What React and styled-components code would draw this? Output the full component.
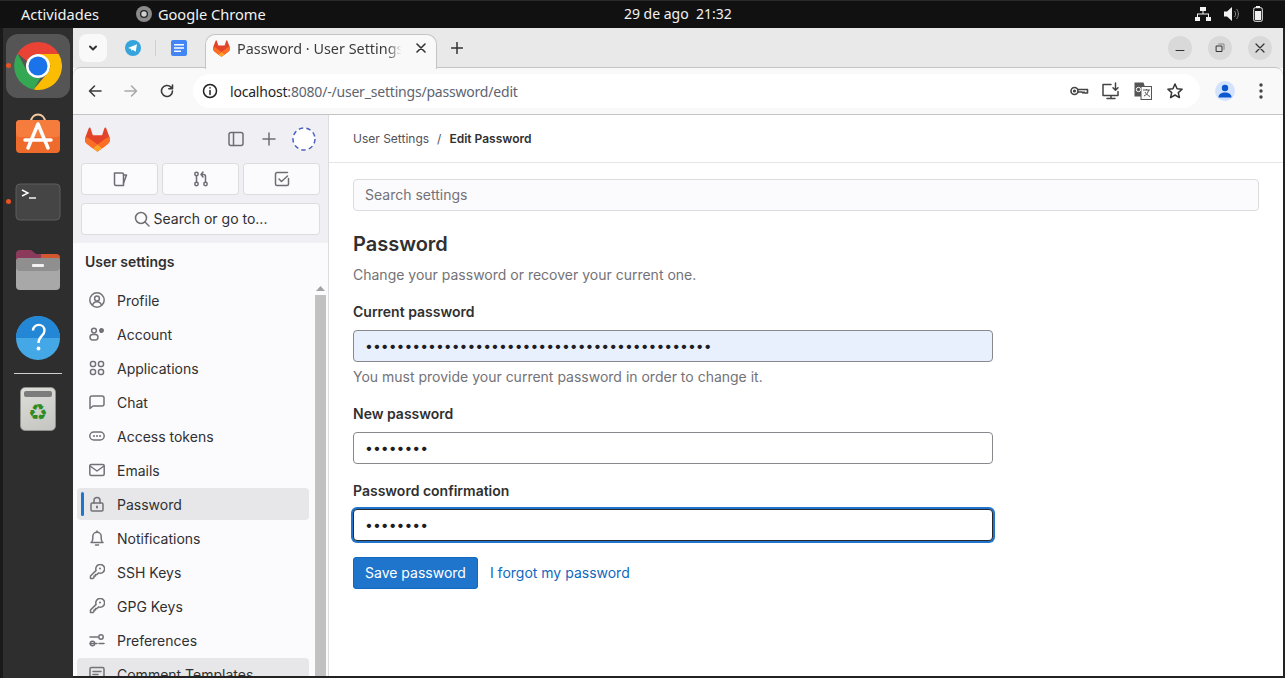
import React from "react";
import styled, { createGlobalStyle } from "styled-components";

const Global = createGlobalStyle`
html, body { margin: 0; padding: 0; background: #2e2e2e; overflow: hidden; }
* { box-sizing: border-box; }
`

const Screen = styled.div`
width: 1285px;
height: 678px;
display: flex;
flex-direction: column;
overflow: hidden;
font-family: Inter, "Liberation Sans", sans-serif;
background: #111;
`
const TopBar = styled.div`
height: 28px;
flex: none;
background: #111;
border-top: 1px solid #2a2a2a;
display: flex;
align-items: center;
color: #f2f2f2;
font-family: "Noto Sans", sans-serif;
font-size: 14.6px;
padding: 0 0 2px 21px;
`
const TopApp = styled.div`
display: flex;
align-items: center;
gap: 6px;
margin-left: 37px;
width: 488px;
`
const Clock = styled.div`
width: 400px;
font-size: 14px;
white-space: pre;
`
const TopTray = styled.div`
margin-left: auto;
display: flex;
align-items: center;
gap: 13px;
padding-right: 22px;
`
const Main = styled.div`
flex: 1;
display: flex;
min-height: 0;
`
const Dock = styled.div`
width: 73px;
flex: none;
background: #2e2e2e;
border-left: 3px solid #1a1a1a;
padding: 6px 3px 0 3px;
display: flex;
flex-direction: column;
align-items: center;
gap: 4px;
`
const DockTile = styled.div`
width: 64px;
height: 64px;
flex: none;
border-radius: 12px;
position: relative;
display: flex;
align-items: center;
justify-content: center;
background: ${p => (p.$active ? "#555" : "transparent")};
`
const RunDot = styled.span`
position: absolute;
left: 0;
top: 29px;
width: 5px;
height: 5px;
border-radius: 50%;
background: #e95420;
`
const DockRule = styled.div`
width: 48px;
height: 1px;
flex: none;
background: #cfcfcf;
margin-top: -1px;
margin-bottom: -1px;
`
const TrashCan = styled.div`
width: 36px;
height: 44px;
border-radius: 5px;
background: linear-gradient(160deg, #dededa, #c4c4c0);
border: 1px solid #8f8f8b;
padding: 3px;
display: flex;
flex-direction: column;
align-items: center;
`
const TrashLid = styled.div`
width: 100%;
height: 6px;
flex: none;
border-radius: 2px;
background: #7c7c7c;
`
const TrashMark = styled.div`
margin-top: 3px;
font-family: "DejaVu Sans", sans-serif;
font-size: 22px;
line-height: 26px;
color: #2e8b1f;
`
const Browser = styled.div`
flex: 1;
display: flex;
flex-direction: column;
min-width: 0;
border-right: 2px solid #222;
border-bottom: 2px solid #222;
background: #fff;
`
const TabStrip = styled.div`
height: 40px;
flex: none;
background: #e9e9e9;
display: flex;
align-items: flex-start;
padding: 6px 11px 0 6px;
`
const TabList = styled.button`
width: 28px;
height: 28px;
border: none;
border-radius: 8px;
background: #f9f9f9;
display: flex;
align-items: center;
justify-content: center;
padding: 0;
`
const PinnedTab = styled.div`
width: 24px;
height: 28px;
display: flex;
align-items: center;
justify-content: center;
margin-left: ${p => p.$gap}px;
`
const TabRule = styled.div`
width: 1px;
height: 16px;
margin: 6px 0 0 10px;
background: #cfcfcf;
`
const Tab = styled.div`
width: 232px;
height: 35px;
margin-left: 14px;
background: #f9f9f9;
border: 1px solid #c4c4c4;
border-bottom: none;
border-radius: 10px 10px 0 0;
display: flex;
align-items: center;
padding: 0 10px 8px 7px;
position: relative;
z-index: 2;
`
const TabTitle = styled.div`
flex: 1;
margin-left: 7px;
font-family: "Noto Sans", sans-serif;
font-size: 14.4px;
color: #3c3c3c;
white-space: nowrap;
-webkit-mask-image: linear-gradient(to right, #000 84%, transparent 92%);
mask-image: linear-gradient(to right, #000 84%, transparent 92%);
`
const NewTab = styled.div`
width: 24px;
height: 28px;
margin-left: 8px;
display: flex;
align-items: center;
justify-content: center;
`
const WindowButtons = styled.div`
margin-left: auto;
display: flex;
gap: 16px;
margin-top: 2px;
`
const WindowButton = styled.div`
width: 24px;
height: 24px;
border-radius: 50%;
background: #d9d9d9;
display: flex;
align-items: center;
justify-content: center;
`
const Toolbar = styled.div`
height: 48px;
flex: none;
margin-top: -1px;
background: #f9f9f9;
border-top: 1px solid #c4c4c4;
border-bottom: 1px solid #c4c4c4;
border-top-left-radius: 8px;
border-top-right-radius: 8px;
display: flex;
align-items: center;
padding: 0 12px 0 10px;
`
const NavButton = styled.div`
width: 24px;
height: 24px;
margin-right: 12px;
display: flex;
align-items: center;
justify-content: center;
`
const Omnibox = styled.div`
width: 1007px;
height: 34px;
margin-left: 2px;
background: #fff;
border-radius: 17px;
display: flex;
align-items: center;
padding: 0 15px 0 9px;
`
const SiteInfo = styled.div`
width: 16px;
height: 16px;
margin-right: 12px;
display: flex;
`
const Url = styled.div`
flex: 1;
font-family: "Noto Sans", sans-serif;
font-size: 14px;
letter-spacing: -0.2px;
color: #5d6470;
`
const Host = styled.span`
color: #1f1f1f;
`
const OmniIcons = styled.div`
display: flex;
align-items: center;
gap: 12px;
`
const OmniIcon = styled.div`
width: 20px;
height: 20px;
display: flex;
align-items: center;
justify-content: center;
`
const Avatar = styled.div`
width: 20px;
height: 20px;
margin-left: 15px;
border-radius: 50%;
background: #d3e3fd;
display: flex;
align-items: center;
justify-content: center;
`
const KebabWrap = styled.div`
width: 20px;
margin-left: 16px;
display: flex;
justify-content: center;
`
const Page = styled.div`
flex: 1;
display: flex;
min-height: 0;
background: #fff;
`
const Sidebar = styled.aside`
width: 256px;
flex: none;
background: #fbfafd;
border-right: 1px solid #dcdcde;
display: flex;
flex-direction: column;
min-height: 0;
`
const SideTop = styled.div`
background: #f0f0f4;
height: 128px;
flex: none;
padding: 8px 8px 0 8px;
`
const SideHeader = styled.div`
height: 32px;
display: flex;
align-items: center;
padding-left: 4px;
margin-bottom: 8px;
`
const SideActions = styled.div`
margin-left: auto;
display: flex;
align-items: center;
gap: 17px;
padding-right: 4px;
`
const Spinner = styled.div`
margin-left: -2px;
display: flex;
`
const QuickRow = styled.div`
display: grid;
grid-template-columns: repeat(3, 77px);
gap: 4px;
margin-bottom: 8px;
`
const QuickButton = styled.button`
height: 32px;
padding: 0;
background: #fbfafd;
border: none;
border-radius: 4px;
box-shadow: inset 0 0 0 1px #dcdcde;
display: flex;
align-items: center;
justify-content: center;
`
const SearchButton = styled(QuickButton)`
width: 239px;
gap: 4px;
padding-bottom: 1px;
font-family: Inter, sans-serif;
font-size: 14px;
color: #303030;
`
const SideTitle = styled.div`
height: 38px;
flex: none;
padding: 0 0 2px 12px;
display: flex;
align-items: center;
font-size: 14px;
font-weight: 600;
color: #303030;
`
const SideScroll = styled.div`
flex: 1;
min-height: 0;
display: flex;
overflow: hidden;
`
const NavList = styled.nav`
width: 240px;
padding: 3px 4px 0 4px;
display: flex;
flex-direction: column;
gap: 2px;
`
const NavItem = styled.div`
height: 32px;
flex: none;
position: relative;
border-radius: 4px;
display: flex;
align-items: center;
gap: 12px;
padding-left: 12px;
font-size: 14px;
color: #303030;
background: ${p => (p.$on ? "#e7e7e9" : "transparent")};
`
const ActiveMark = styled.span`
position: absolute;
left: 4px;
top: 4px;
bottom: 4px;
width: 3px;
border-radius: 2px;
background: #1f75cb;
`
const Track = styled.div`
width: 15px;
padding: 0 2px;
display: flex;
flex-direction: column;
align-items: center;
`
const Arrow = styled.div`
height: 14px;
flex: none;
display: flex;
align-items: center;
justify-content: center;
`
const Thumb = styled.div`
flex: 1;
width: 11px;
background: #c1c1c1;
`
const Content = styled.main`
flex: 1;
min-width: 0;
display: flex;
flex-direction: column;
`
const Crumbs = styled.div`
height: 48px;
flex: none;
border-bottom: 1px solid #e5e5e7;
display: flex;
align-items: center;
padding-left: 24px;
font-size: 12px;
color: #535158;
`
const CrumbSep = styled.span`
margin: 0 8px;
`
const CrumbNow = styled.span`
color: #303030;
font-weight: 600;
`
const Body = styled.div`
padding: 16px 24px 0 24px;
`
const SearchField = styled.input`
display: block;
width: 100%;
height: 32px;
border: 1px solid #dcdcde;
border-radius: 4px;
background: #fbfafd;
padding: 0 11px 2px;
font-family: Inter, sans-serif;
font-size: 14px;
&::placeholder { color: #737278; opacity: 1; }
`
const Heading = styled.h2`
margin: 20px 0 0;
font-size: 20px;
line-height: 26px;
font-weight: 600;
color: #303030;
`
const Lead = styled.p`
margin: 8px 0 0;
font-size: 14px;
line-height: 20px;
color: #737278;
`
const Group = styled.div`
width: 640px;
margin-top: ${p => p.$top}px;
`
const Label = styled.label`
display: block;
padding-top: 1px;
font-size: 14px;
line-height: 20px;
font-weight: 600;
color: #303030;
margin-bottom: 8px;
`
const PasswordInput = styled.input`
display: block;
width: 100%;
height: 32px;
padding: 0 11px 1px;
border-radius: 4px;
outline: none;
font-family: Inter, sans-serif;
font-size: 14px;
color: #1f1e24;
background: ${p => (p.$filled ? "#e8f0fe" : "#fff")};
border: 1px solid ${p => (p.$focus ? "#28272d" : "#89888d")};
box-shadow: ${p => (p.$focus ? "0 0 0 2px #1f75cb" : "none")};
`
const Hint = styled.div`
margin-top: 5px;
font-size: 14px;
line-height: 20px;
color: #737278;
`
const Actions = styled.div`
margin-top: 16px;
display: flex;
align-items: center;
gap: 12px;
`
const SaveButton = styled.button`
height: 32px;
padding: 0 12px 1px;
border: none;
border-radius: 4px;
background: #1f75cb;
box-shadow: inset 0 0 0 1px #1068bf;
color: #fff;
font-family: Inter, sans-serif;
font-size: 14px;
`
const ForgotLink = styled.a`
font-size: 14px;
padding-bottom: 1px;
color: #1068bf;
`

// small svg helper for the 16px line icons
const Line = ({ s = 16, c = "#737278", w = 1.5, children, box = 16 }) => (
  <svg width={s} height={s} viewBox={`0 0 ${box} ${box}`} fill="none" stroke={c} strokeWidth={w} strokeLinecap="round" strokeLinejoin="round">
    {children}
  </svg>
)

const Tanuki = ({ s = 24 }) => (
  <svg width={s} height={s} viewBox="0 0 25 24">
    <path fill="#E24329" d="m24.507 9.5-.034-.09L21.082.562a.896.896 0 0 0-1.694.091l-2.29 7.01H7.825L5.535.653a.898.898 0 0 0-1.694-.09L.451 9.411.416 9.5a6.297 6.297 0 0 0 2.09 7.278l.012.01.03.022 5.16 3.867 2.56 1.935 1.554 1.176a1.051 1.051 0 0 0 1.268 0l1.555-1.176 2.56-1.935 5.197-3.89.014-.01A6.297 6.297 0 0 0 24.507 9.5Z" />
    <path fill="#FC6D26" d="m24.507 9.5-.034-.09a11.44 11.44 0 0 0-4.56 2.051l-7.447 5.632 4.742 3.584 5.197-3.89.014-.01A6.297 6.297 0 0 0 24.507 9.5Z" />
    <path fill="#FCA326" d="m7.707 20.677 2.56 1.935 1.555 1.176a1.051 1.051 0 0 0 1.268 0l1.555-1.176 2.56-1.935-4.743-3.584-4.755 3.584Z" />
    <path fill="#FC6D26" d="M5.01 11.461a11.43 11.43 0 0 0-4.56-2.05L.416 9.5a6.297 6.297 0 0 0 2.09 7.278l.012.01.03.022 5.16 3.867 4.745-3.584-7.444-5.632Z" />
  </svg>
)

const ChromeLogo = () => (
  <svg width="48" height="48" viewBox="0 0 48 48">
    <path fill="#ea4335" d="M24 0a24 24 0 0 1 20.8 12H24a12 12 0 0 0-11 7.2L3.6 11.6A24 24 0 0 1 24 0Z" />
    <path fill="#34a853" d="M3.6 11.6 13.6 30a12 12 0 0 0 13 5.8L19.6 47.6A24 24 0 0 1 3.6 11.6Z" />
    <path fill="#fbbc04" d="M44.8 12A24 24 0 0 1 19.6 47.6L34.4 30A12 12 0 0 0 33.6 16.6Z" fillRule="evenodd" />
    <path fill="#fbbc04" d="M24 12h20.8L30 30Z" />
    <circle cx="24" cy="24" r="12" fill="#fff" />
    <circle cx="24" cy="24" r="9.5" fill="#1a73e8" />
  </svg>
)

const SoftwareIcon = () => (
  <svg width="46" height="46" viewBox="0 0 46 46">
    <path d="M16 11c0-10 14-10 14 0" fill="none" stroke="#f2c9a0" strokeWidth="2" />
    <rect x="1" y="9" width="44" height="33" rx="4" fill="#ee6b2c" />
    <rect x="1" y="9" width="44" height="17" rx="4" fill="#f57c3c" />
    <path d="M23 13 13 37M23 13l10 24M10 29h26" stroke="#fff" strokeWidth="3.5" fill="none" strokeLinecap="round" />
  </svg>
)

const TerminalIcon = () => (
  <svg width="46" height="38" viewBox="0 0 46 38">
    <rect x="1" y="1" width="44" height="36" rx="4" fill="#454545" stroke="#5c5c5c" />
    <path d="M7 7l6 3-6 3" fill="none" stroke="#fff" strokeWidth="1.4" />
    <path d="M14 15h7" stroke="#fff" strokeWidth="1.4" />
  </svg>
)

const FilesIcon = () => (
  <svg width="46" height="42" viewBox="0 0 46 42">
    <path d="M1 5a4 4 0 0 1 4-4h11l5 4h20a4 4 0 0 1 4 4v8H1Z" fill="#8c3a5c" />
    <path d="M26 5h15a4 4 0 0 1 4 4v8H26Z" fill="#d2562e" />
    <rect x="1" y="9" width="44" height="32" rx="4" fill="#a8a8a8" />
    <rect x="1" y="9" width="44" height="13" rx="4" fill="#8f8f8f" />
    <rect x="17" y="15" width="12" height="3" rx="1" fill="#f1f1f1" />
  </svg>
)

const HelpIcon = () => (
  <svg width="46" height="46" viewBox="0 0 46 46">
    <circle cx="23" cy="23" r="22" fill="#45a8e6" />
    <path d="M1 23a22 22 0 0 1 44 0Z" fill="#2487d6" />
    <path d="M18 15.500c0-7.500 11.500-7.500 11.500 0 0 5.500-6 5.500-6 12.500" fill="none" stroke="#fff" strokeWidth="2.400" />
    <circle cx="23.500" cy="33.500" r="1.900" fill="#fff" />
  </svg>
)

const navItems = [
  ["Profile", <><circle cx="8" cy="8" r="7.2" /><circle cx="8" cy="6.5" r="2.4" /><path d="M3.6 13c.6-2.2 2.2-3.3 4.4-3.3s3.8 1.1 4.4 3.3" /></>],
  ["Account", <><circle cx="5" cy="4.6" r="2.4" /><rect x="1" y="8.5" width="8" height="5.5" rx="2.7" /><circle cx="12.5" cy="4.5" r="1.6" fill="#737278" strokeWidth="1.8" strokeDasharray="1.5 .5" /></>],
  ["Applications", <><rect x="1.5" y="1.5" width="5" height="5" rx="2" /><rect x="9.5" y="1.5" width="5" height="5" rx="2" /><rect x="1.5" y="9.5" width="5" height="5" rx="2" /><rect x="9.5" y="9.5" width="5" height="5" rx="2" /></>],
  ["Chat", <path d="M1 14.5V4a2 2 0 0 1 2-2h10a2 2 0 0 1 2 2v6a2 2 0 0 1-2 2H4Z" />],
  ["Access tokens", <><rect x=".8" y="4" width="14.4" height="8" rx="4" /><path d="M5 8h.01M8 8h.01M11 8h.01" strokeWidth="2" /></>],
  ["Emails", <><rect x=".8" y="2.5" width="14.4" height="11" rx="1.5" /><path d="m1 4 7 5 7-5" /></>],
  ["Password", <><rect x="2" y="7" width="12" height="8" rx="1.2" /><path d="M5 7V4.5a3 3 0 0 1 6 0V7" /><path d="M8 10.5v1" strokeWidth="2" /></>],
  ["Notifications", <><path d="M2 12.5c1.4-1 1.8-2.2 1.8-4V6.4a4.2 4.2 0 0 1 8.4 0v2.100c0 1.800.4 3 1.800 4Z" /><path d="M8 1v1M6.500 15h3" /></>],
  ["SSH Keys", <><path d="M1.500 14.500v-2.500l5.600-5.600a4.400 4.400 0 1 1 2.500 2.500L8 10.500H6.500V12H5v1.500l-1 1Z" /><path d="M11 4.500h.01" strokeWidth="2" /></>],
  ["GPG Keys", <><path d="M1.500 14.500v-2.500l5.600-5.600a4.400 4.400 0 1 1 2.500 2.500L8 10.500H6.500V12H5v1.500l-1 1Z" /><path d="M11 4.500h.01" strokeWidth="2" /></>],
  ["Preferences", <><path d="M1 5h8M1 11.500h7" /><circle cx="12" cy="5" r="2.200" /><circle cx="3.500" cy="11.500" r="2.200" /><path d="M10 11.500h5" /></>],
  ["Comment Templates", <><rect x="1" y="1.500" width="14" height="12" rx="1.500" /><path d="M4 5.500h8M4 8.500h5" /></>, true],
]

const Dots = "•"

export default function App() {
  return (
    <Screen>
      <Global />
      <TopBar>
        <span>Actividades</span>
        <TopApp>
          <svg width="16" height="16" viewBox="0 0 16 16">
            <circle cx="8" cy="8" r="8" fill="#8a8a8a" />
            <circle cx="8" cy="8" r="4" fill="#222" />
            <circle cx="8" cy="8" r="2.700" fill="#cfcfcf" />
          </svg>
          <span>Google Chrome</span>
        </TopApp>
        <Clock>29 de ago  21:32</Clock>
        <TopTray>
          <svg width="16" height="14" viewBox="0 0 16 14" fill="#f2f2f2">
            <rect x="5" y="0" width="6" height="4" />
            <rect x="0" y="10" width="5" height="4" />
            <rect x="11" y="10" width="5" height="4" />
            <path d="M7.500 4h1v2.500H14V10h-1V7.500H3V10H2V6.500h5.500Z" />
          </svg>
          <svg width="16" height="14" viewBox="0 0 16 14">
            <path d="M0 4.500h3L8 0v14l-5-4.500H0Z" fill="#f2f2f2" />
            <path d="M10.500 4c1.500 1.800 1.500 4.200 0 6M12.500 2c2.500 3 2.500 7 0 10" fill="none" stroke="#8d8d8d" />
          </svg>
          <svg width="10" height="16" viewBox="0 0 10 16">
            <rect x="3" y="0" width="4" height="2" fill="#f2f2f2" />
            <rect x=".7" y="1.700" width="8.600" height="13.600" rx="1.500" fill="none" stroke="#f2f2f2" />
            <rect x="2" y="5" width="6" height="9" fill="#f2f2f2" />
          </svg>
        </TopTray>
      </TopBar>
      <Main>
        <Dock>
          <DockTile $active><RunDot /><ChromeLogo /></DockTile>
          <DockTile><SoftwareIcon /></DockTile>
          <DockTile><RunDot /><TerminalIcon /></DockTile>
          <DockTile><FilesIcon /></DockTile>
          <DockTile><HelpIcon /></DockTile>
          <DockRule />
          <DockTile>
            <TrashCan>
              <TrashLid />
              <TrashMark>♻</TrashMark>
            </TrashCan>
          </DockTile>
        </Dock>
        <Browser>
          <TabStrip>
            <TabList>
              <Line s={12} c="#333" w={2} box={12}><path d="m3 4.500 3 3 3-3" /></Line>
            </TabList>
            <PinnedTab $gap={14}>
              <svg width="16" height="16" viewBox="0 0 16 16">
                <circle cx="8" cy="8" r="8" fill="#35a3dc" />
                <path d="M3 8 12 4.200 10.700 11.800 7.700 9.800 6.500 11 6.200 9Z" fill="#fff" />
              </svg>
            </PinnedTab>
            <TabRule />
            <PinnedTab $gap={11}>
              <svg width="16" height="16" viewBox="0 0 16 16">
                <rect width="16" height="16" rx="2" fill="#4285f4" />
                <path d="M3 4h10v1.500H3ZM3 7.300h10v1.500H3ZM3 10.500h7V12H3Z" fill="#fff" />
              </svg>
            </PinnedTab>
            <Tab>
              <Tanuki s={17} />
              <TabTitle>Password · User Settings</TabTitle>
              <Line s={10} c="#333" w={1.600} box={10}><path d="m1 1 8 8M9 1 1 9" /></Line>
            </Tab>
            <NewTab>
              <Line s={12} c="#333" w={1.500} box={12}><path d="M6 .500v11M.500 6h11" /></Line>
            </NewTab>
            <WindowButtons>
              <WindowButton><Line s={10} c="#333" w={1} box={10}><path d="M1 7.500h8" /></Line></WindowButton>
              <WindowButton>
                <Line s={10} c="#333" w={1} box={10}><rect x="1.500" y="3" width="5.500" height="5.500" /><path d="M3.500 1h5.500v5.500" stroke="#888" /></Line>
              </WindowButton>
              <WindowButton><Line s={10} c="#333" w={1.200} box={10}><path d="m1 1 8 8M9 1 1 9" /></Line></WindowButton>
            </WindowButtons>
          </TabStrip>
          <Toolbar>
            <NavButton>
              <Line s={14} c="#3c3c3c" w={1.600} box={14}><path d="M13 7H1.500M6.500 2 1.500 7l5 5" /></Line>
            </NavButton>
            <NavButton>
              <Line s={14} c="#a9a9a9" w={1.600} box={14}><path d="M1 7h11.500M7.500 2l5 5-5 5" /></Line>
            </NavButton>
            <NavButton>
              <Line s={14} c="#3c3c3c" w={1.600} box={14}><path d="M12.500 7a5.500 5.500 0 1 1-1.600-3.900L12.500 4.700M12.500 1v3.700H8.800" /></Line>
            </NavButton>
            <Omnibox>
              <SiteInfo>
                <Line s={16} c="#222" w={1.500}><circle cx="8" cy="8" r="6.500" /><path d="M8 7.500V11.500M8 4.800v.2" /></Line>
              </SiteInfo>
              <Url><Host>localhost</Host>:8080/-/user_settings/password/edit</Url>
              <OmniIcons>
                <OmniIcon>
                  <Line s={20} c="#444" w={1.600} box={20}><circle cx="5.500" cy="10" r="3.500" /><path d="M9 8.500h9.500v3.500h-2.500l-1-1-1 1-1-1H9" /><circle cx="5.500" cy="10" r=".8" fill="#444" /></Line>
                </OmniIcon>
                <OmniIcon>
                  <Line s={20} c="#444" w={1.500} box={20}><path d="M10 3.500H2v11h15v-4" /><path d="M6 17.500h8M10 15v2.500" /><path d="M14.500 2v7M12 6.800l2.500 2.500L17 6.800" /></Line>
                </OmniIcon>
                <OmniIcon>
                  <svg width="20" height="20" viewBox="0 0 20 20">
                    <path d="M1.500 1.500h9l1 3v11h-10Z" fill="#555" />
                    <rect x="8" y="5.500" width="10.500" height="13" fill="#fbfbfb" stroke="#555" />
                    <path d="M10 9h7M13.500 8v1M11 15c2.500-1 4-3 4.500-6M12 11c1 2 3 3.500 5 4.500" fill="none" stroke="#555" />
                    <circle cx="5.500" cy="8.500" r="2.200" fill="none" stroke="#fff" />
                  </svg>
                </OmniIcon>
                <OmniIcon>
                  <Line s={18} c="#333" w={1.500} box={18}><path d="m9 2 2.100 4.700 5 .5-3.800 3.400 1.100 5L9 13l-4.400 2.600 1.100-5L1.900 7.200l5-.5Z" /></Line>
                </OmniIcon>
              </OmniIcons>
            </Omnibox>
            <Avatar>
              <svg width="14" height="14" viewBox="0 0 14 14" fill="#0b57d0">
                <circle cx="7" cy="4" r="3.200" />
                <path d="M.5 13.500c0-3.500 2.900-5 6.500-5s6.500 1.500 6.500 5Z" />
              </svg>
            </Avatar>
            <KebabWrap>
              <svg width="4" height="16" viewBox="0 0 4 16" fill="#444">
                <circle cx="2" cy="2" r="1.700" /><circle cx="2" cy="8" r="1.700" /><circle cx="2" cy="14" r="1.700" />
              </svg>
            </KebabWrap>
          </Toolbar>
          <Page>
            <Sidebar>
              <SideTop>
                <SideHeader>
                  <Tanuki s={25} />
                  <SideActions>
                    <Line c="#6e6d73"><rect x="1" y="1.500" width="14" height="13" rx="2" /><path d="M5.500 1.500v13" /></Line>
                    <Line c="#6e6d73"><path d="M8 2v12M2 8h12" /></Line>
                    <Spinner>
                      <svg width="24" height="24" viewBox="0 0 24 24">
                        <circle cx="12" cy="12" r="11" fill="#fff" stroke="#4a5fc1" strokeWidth="1.500" strokeDasharray="4.500 3.200" />
                      </svg>
                    </Spinner>
                  </SideActions>
                </SideHeader>
                <QuickRow>
                  <QuickButton>
                    <Line c="#6e6d73"><path d="M2.500 2h7.500a1.500 1.500 0 0 1 1.500 1.500v11H4A1.500 1.500 0 0 1 2.500 13Z" /><path d="M11.500 4h3l-3 8" /></Line>
                  </QuickButton>
                  <QuickButton>
                    <Line c="#6e6d73"><circle cx="3.500" cy="3" r="1.700" /><circle cx="3.500" cy="13" r="1.700" /><circle cx="12.500" cy="13" r="1.700" /><path d="M3.500 4.700v6.600M12.500 11.300V5.500a2 2 0 0 0-2-2H8M10 1 8 3.500 10 6" /></Line>
                  </QuickButton>
                  <QuickButton>
                    <Line c="#6e6d73"><path d="M14.500 7.500v5.500a1.500 1.500 0 0 1-1.500 1.500H3A1.500 1.500 0 0 1 1.500 13V3A1.500 1.500 0 0 1 3 1.500h10.500" /><path d="m5 8 2.500 2.500 6-5.500" /></Line>
                  </QuickButton>
                </QuickRow>
                <SearchButton>
                  <Line c="#6e6d73"><circle cx="7" cy="7" r="5.500" /><path d="m11 11 4 4" /></Line>
                  Search or go to...
                </SearchButton>
              </SideTop>
              <SideTitle>User settings</SideTitle>
              <SideScroll>
                <NavList>
                  {navItems.map(([name, icon, hovered]) => (
                    <NavItem key={name} $on={name === "Password" || hovered}>
                      {name === "Password" && <ActiveMark />}
                      <Line>{icon}</Line>
                      {name}
                    </NavItem>
                  ))}
                </NavList>
                <Track>
                  <Arrow>
                    <svg width="9" height="5" viewBox="0 0 9 5"><path d="M4.500 0 9 5H0Z" fill="#a3a3a3" /></svg>
                  </Arrow>
                  <Thumb />
                </Track>
              </SideScroll>
            </Sidebar>
            <Content>
              <Crumbs>
                User Settings<CrumbSep>/</CrumbSep><CrumbNow>Edit Password</CrumbNow>
              </Crumbs>
              <Body>
                <SearchField placeholder="Search settings" />
                <Heading>Password</Heading>
                <Lead>Change your password or recover your current one.</Lead>
                <Group $top={16}>
                  <Label>Current password</Label>
                  <PasswordInput type="password" readOnly $filled value={Dots.repeat(44)} />
                  <Hint>You must provide your current password in order to change it.</Hint>
                </Group>
                <Group $top={16}>
                  <Label>New password</Label>
                  <PasswordInput type="password" readOnly value={Dots.repeat(8)} />
                </Group>
                <Group $top={16}>
                  <Label>Password confirmation</Label>
                  <PasswordInput type="password" readOnly $focus value={Dots.repeat(8)} />
                  <Actions>
                    <SaveButton>Save password</SaveButton>
                    <ForgotLink>I forgot my password</ForgotLink>
                  </Actions>
                </Group>
              </Body>
            </Content>
          </Page>
        </Browser>
      </Main>
    </Screen>
  )
}
